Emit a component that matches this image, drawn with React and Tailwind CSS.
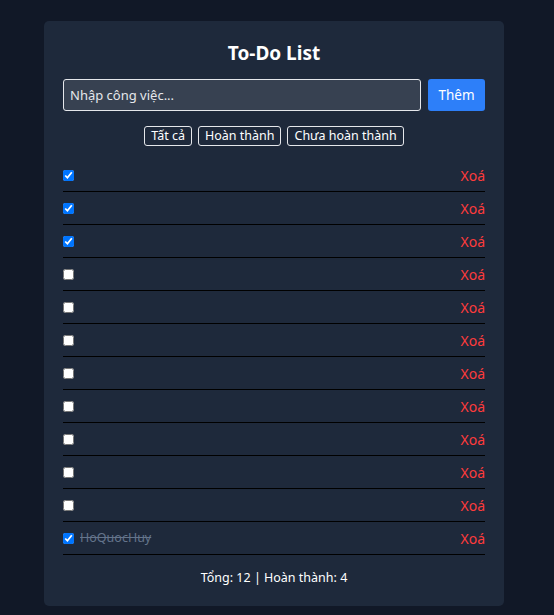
import React from "react";

const todos = [
  { text: "", done: true },
  { text: "", done: true },
  { text: "", done: true },
  { text: "", done: false },
  { text: "", done: false },
  { text: "", done: false },
  { text: "", done: false },
  { text: "", done: false },
  { text: "", done: false },
  { text: "", done: false },
  { text: "", done: false },
  { text: "HoQuocHuy", done: true },
];

export default function App() {
  return (
    <div
      className="min-h-[615px] bg-[#111827] pt-[21px] pb-[9px] text-white"
      style={{ fontFamily: '"Noto Sans", "Open Sans", sans-serif' }}
    >
      <div className="ml-[44px] w-[460px] rounded-[5px] bg-[#1e293b] px-[19px] pt-[20px] pb-[19px]">
        <h2 className="text-center text-[19px] font-bold leading-[24px]">To-Do List</h2>
        <div className="mt-[14px] flex gap-[7px]">
          <input
            readOnly
            placeholder="Nhập công việc..."
            className="h-[32px] flex-1 rounded-[3px] border border-[#e5e7eb] bg-[#374151] px-[6px] text-[13px] text-white outline-none placeholder:text-[#e5e7eb]"
          />
          <button className="h-[32px] w-[57px] rounded-[3px] bg-[#2d7ff9] text-[13.5px] text-white">Thêm</button>
        </div>
        <div className="mt-[15px] flex justify-center gap-[6px]">
          {["Tất cả", "Hoàn thành", "Chưa hoàn thành"].map((t) => (
            <button
              key={t}
              className="h-[20px] rounded-[3px] border border-[#e5e7eb] px-[6px] text-[12.5px] leading-[18px] text-white"
            >
              {t}
            </button>
          ))}
        </div>
        <ul className="mt-[13px]">
          {todos.map((t, i) => (
            <li key={i} className="flex h-[33px] items-center border-b border-black">
              <input type="checkbox" readOnly checked={t.done} className="m-0 h-[11px] w-[11px]" />
              <span
                className={
                  "ml-[6px] flex-1 text-[12.5px] " +
                  (t.done ? "text-[#64748b] line-through" : "text-white")
                }
              >
                {t.text}
              </span>
              <span className="text-[14px] text-[#ff3b3b]">Xoá</span>
            </li>
          ))}
        </ul>
        <p className="mt-[14px] text-center text-[12.5px] leading-[18px]">Tổng: 12 | Hoàn thành: 4</p>
      </div>
    </div>
  );
}
